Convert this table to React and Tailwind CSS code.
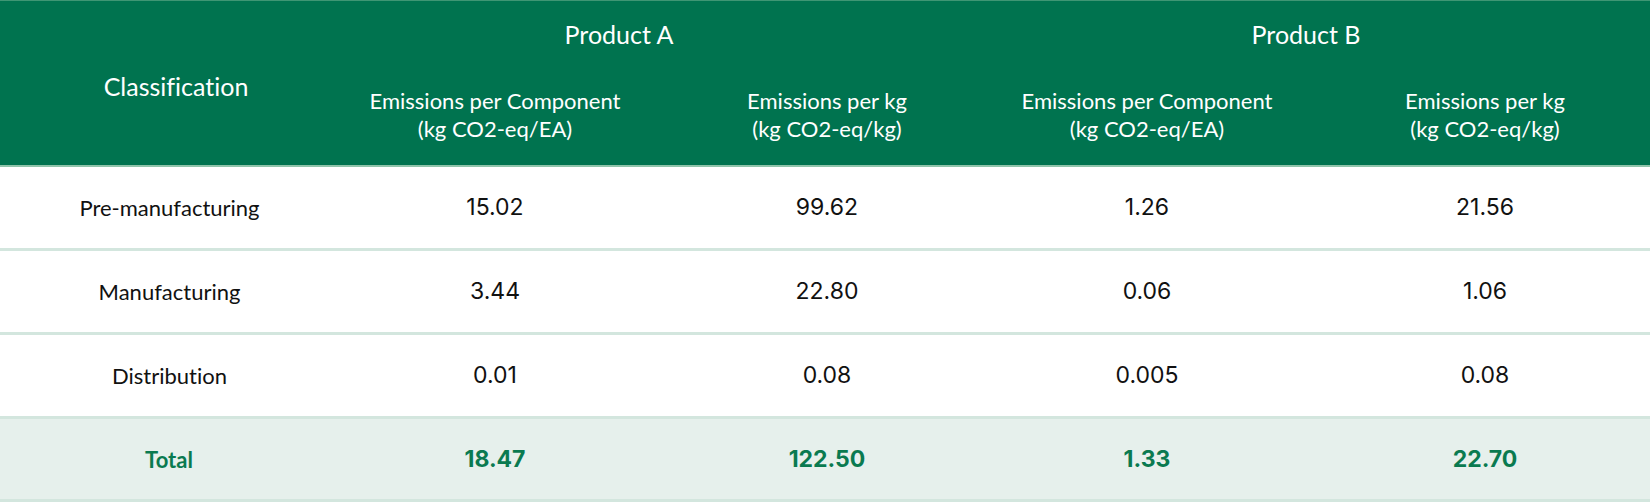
import React from 'react';

const rows = [
    { label: "Pre-manufacturing", values: ["15.02", "99.62", "1.26", "21.56"] },
    { label: "Manufacturing", values: ["3.44", "22.80", "0.06", "1.06"] },
    { label: "Distribution", values: ["0.01", "0.08", "0.005", "0.08"] },
];

const total = { label: "Total", values: ["18.47", "122.50", "1.33", "22.70"] };

const subHeaders = [
    ["Emissions per Component", "(kg CO2-eq/EA)"],
    ["Emissions per kg", "(kg CO2-eq/kg)"],
    ["Emissions per Component", "(kg CO2-eq/EA)"],
    ["Emissions per kg", "(kg CO2-eq/kg)"],
];

// small nudges so each column's text sits where the original has it
const colShift = ["", "pl-[4px]", "pr-[16px]", ""];

const labelFont = "font-['Lato','Liberation_Sans',sans-serif] [font-variant-ligatures:none]";
const numFont = "font-['Inter','Liberation_Sans',sans-serif]";

export default function App() {
    return (
        <div className="w-[1650px] h-[503px] bg-white">
            {/* header */}
            <div className={`grid grid-cols-5 grid-rows-[68px_96px] bg-[#00734f] text-white border-t border-[#3f9674] ${labelFont}`}>
                <div className="row-span-2 flex items-center justify-center pt-2 pl-[22px] text-[25px]">
                    Classification
                </div>
                <div className="col-span-2 flex items-center justify-center pr-[82px] text-[25px]">Product A</div>
                <div className="col-span-2 flex items-center justify-center pr-[28px] text-[25px]">Product B</div>
                {subHeaders.map((h, i) => (
                    <div key={i} className={`flex flex-col items-center justify-center text-[22px] leading-[28px] pb-1 ${colShift[i]}`}>
                        <span>{h[0]}</span>
                        <span>{h[1]}</span>
                    </div>
                ))}
            </div>
            <div className="h-[2px] bg-[#8fc4aa]" />

            {/* body */}
            {rows.map((row) => (
                <div key={row.label} className="grid grid-cols-5 h-[84px] border-b-[3px] border-[#d3e6de] items-center text-[#111]">
                    <div className={`text-center text-[22px] pl-[9px] ${labelFont}`}>{row.label}</div>
                    {row.values.map((v, i) => (
                        <div key={i} className={`text-center text-[23px] ${colShift[i]} ${numFont}`}>{v}</div>
                    ))}
                </div>
            ))}
            <div className="grid grid-cols-5 h-[83px] border-b-[3px] border-[#d3e6de] items-center bg-[#e6f0ec] text-[#0a7a50]">
                <div className={`text-center text-[22px] font-bold pl-[8px] ${labelFont}`}>{total.label}</div>
                {total.values.map((v, i) => (
                    <div key={i} className={`text-center text-[23px] font-bold ${colShift[i]} ${numFont}`}>{v}</div>
                ))}
            </div>
        </div>
    );
}
